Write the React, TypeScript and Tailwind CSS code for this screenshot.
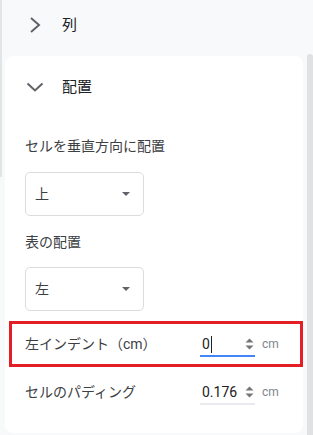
import React from 'react';

const font = { fontFamily: 'Roboto, "Noto Sans CJK JP", sans-serif' };

const Spinner: React.FC = () => (
  <svg width="9" height="12" viewBox="0 0 9 12" className="shrink-0">
    <path d="M0.5 4.5 L4.5 0.5 L8.5 4.5 Z" fill="#757575" />
    <path d="M0.5 7.5 L4.5 11.5 L8.5 7.5 Z" fill="#757575" />
  </svg>
);

const SelectBox: React.FC<{ value: string }> = ({ value }) => (
  <div className="flex items-center justify-between w-[119px] h-[44px] rounded-[5px] border border-[#dadce0] pl-[9px] pr-[13px]">
    <span className="text-[14px] text-[#3c4043]">{value}</span>
    <svg width="8" height="4" viewBox="0 0 8 4">
      <path d="M0 0 L8 0 L4 4 Z" fill="#5f6368" />
    </svg>
  </div>
);

const NumberRow: React.FC<{ label: string; value: string; active?: boolean }> = ({ label, value, active }) => (
  <div className="flex items-center h-full">
    <span className="w-[175px] shrink-0 text-[14px] text-[#3c4043]">{label}</span>
    <div
      className={`flex items-center justify-between w-[55px] h-[26px] pl-[2px] pr-[1px] pt-[2px] border-b-2 ${
        active ? 'border-[#4285f4]' : 'border-[#e8eaed]'
      }`}
    >
      <span className="flex items-center text-[14px] text-[#202124]">
        {value}
        {active && <span className="ml-[1px] w-px h-[17px] bg-[#202124]" />}
      </span>
      <Spinner />
    </div>
    <span className="pl-[7px] text-[12px] text-[#80868b]">cm</span>
  </div>
);

export default function App() {
  return (
    <div className="w-[313px] h-[435px] bg-[#f8f9fa] flex overflow-hidden" style={font}>
      <div className="w-[2px] shrink-0">
        <div className="h-[177px] bg-[#e3e4e6]" />
      </div>

      <div className="w-[298px] ml-[3px] flex flex-col">
        <div className="h-[50px] flex items-center pl-[24px]">
          <svg width="12" height="16" viewBox="0 0 12 16" className="mr-[21px]">
            <polyline points="2,1 10,8 2,15" fill="none" stroke="#5f6368" strokeWidth="2" />
          </svg>
          <span className="text-[15px] text-[#202124]">列</span>
        </div>

        <div className="mt-[6px] mb-[2px] flex-1 bg-white rounded-[8px] flex flex-col">
          <div className="h-[62px] flex items-center pl-[21px]">
            <svg width="18" height="10" viewBox="0 0 18 10" className="mr-[18px]">
              <polyline points="1.5,1.5 9,8.5 16.5,1.5" fill="none" stroke="#5f6368" strokeWidth="2" />
            </svg>
            <span className="text-[15px] text-[#202124]">配置</span>
          </div>

          <div className="pl-[20px] flex flex-col">
            <p className="mt-[18px] h-[20px] leading-[20px] text-[14px] text-[#3c4043]">セルを垂直方向に配置</p>
            <div className="mt-[16px]">
              <SelectBox value="上" />
            </div>
            <p className="mt-[16px] h-[20px] leading-[20px] text-[14px] text-[#3c4043]">表の配置</p>
            <div className="mt-[15px]">
              <SelectBox value="左" />
            </div>
          </div>

          <div className="mt-[10px] ml-[4px] h-[46px] border-[3px] border-[#e31e24] pl-[13px]">
            <NumberRow label="左インデント（cm）" value="0" active />
          </div>

          <div className="mt-[2px] h-[46px] pl-[20px]">
            <NumberRow label="セルのパディング" value="0.176" />
          </div>
        </div>
      </div>

      <div className="w-[6px] ml-[4px] mt-[54px] bg-[#e0e1e3] rounded-t-[3px]" />
    </div>
  );
}
